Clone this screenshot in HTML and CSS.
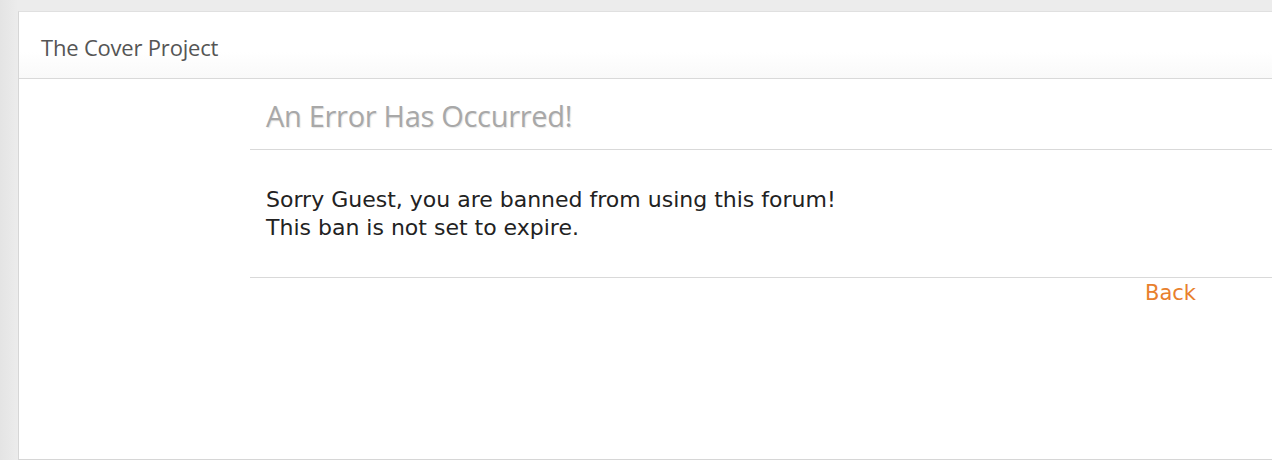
FILE: index.html
```html
<!DOCTYPE html>
<html lang="en">
<head>
    <meta charset="UTF-8">
    <title>The Cover Project - An Error Has Occurred!</title>
    <link rel="stylesheet" href="styles.css">
</head>
<body>
  <div class="wrapper">
    <div class="header"><a href="#" class="site-title">The Cover Project</a></div>
    <div class="main">
      <div class="sidebar"></div>
      <div class="content">
        <h1 class="error-title">An Error Has Occurred!</h1>
        <div class="error-body">
          Sorry Guest, you are banned from using this forum!<br>
          This ban is not set to expire.
        </div>
        <div class="error-foot"><a href="#" class="back">Back</a></div>
      </div>
    </div>
  </div>
</body>
</html>
```

FILE: styles.css
```css
html, body {
    height: 100%;
}
body {
    margin: 0;
    padding: 11px 0 0 18px;
    box-sizing: border-box;
    background: linear-gradient(to right, #e4e4e4, #ececec 18px);
    overflow: hidden;
    font-family: "DejaVu Sans", Verdana, sans-serif;
}
.wrapper {
    background-color: #fff;
    border-left: 1px solid #d6d6d6;
    border-top: 1px solid #e0e0e0;
    border-bottom: 1px solid #d6d6d6;
    height: 449px;
    box-sizing: border-box;
}
.header {
    height: 67px;
    box-sizing: border-box;
    border-bottom: 1px solid #d9d9d9;
    background: linear-gradient(to bottom, #fff 60%, #f9f9f9);
    padding: 20px 0 0 22px;
}
.site-title {
    font-family: "Open Sans", "Noto Sans", sans-serif;
    font-size: 22px;
    color: #555;
    text-decoration: none;
    letter-spacing: -0.2px;
}
.main {
    display: flex;
}
.sidebar {
    width: 231px;
    flex-shrink: 0;
}
.content {
    flex: 1;
}
.error-title {
    margin: 0;
    padding: 17px 0 0 16px;
    height: 71px;
    box-sizing: border-box;
    font-family: "Open Sans", "Noto Sans", sans-serif;
    font-weight: normal;
    font-size: 29px;
    color: #a8a8a8;
    text-shadow: 1px 1px 1px #e6e6e6;
    border-bottom: 1px solid #d9d9d9;
    letter-spacing: -0.3px;
}
.error-body {
    padding: 36px 0 0 16px;
    height: 128px;
    box-sizing: border-box;
    font-size: 22px;
    line-height: 28px;
    color: #222;
    border-bottom: 1px solid #d9d9d9;
}
.error-foot {
    text-align: right;
    padding: 3px 76px 0 0;
}
.back {
    font-size: 21px;
    color: #e8802d;
    text-decoration: none;
}
```
